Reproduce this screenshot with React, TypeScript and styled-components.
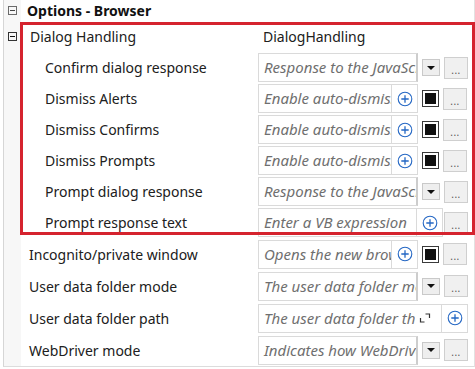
import React from 'react';
import styled, { createGlobalStyle } from 'styled-components';

const GlobalStyle = createGlobalStyle`
  html, body { margin: 0; padding: 0; background: #fff; }
  body {
    font-family: 'Noto Sans', 'Open Sans', sans-serif;
    font-size: 14px;
    color: #202020;
  }
`;

const Frame = styled.div`
  width: 472px;
  margin-left: 3px;
  box-sizing: border-box;
  border-left: 1px solid #d6d6d6;
  border-right: 1px solid #e2e2e2;
  border-bottom: 1px solid #dcdcdc;
`;

const Row = styled.div<{ $h: number }>`
  display: flex;
  align-items: center;
  height: ${({ $h }) => $h}px;
`;

const Gutter = styled.div`
  width: 17px;
  align-self: stretch;
  background: #f7f7f7;
  display: flex;
  align-items: center;
  justify-content: center;
`;

const Toggle = styled.span<{ $dark?: boolean }>`
  width: 9px;
  height: 9px;
  box-sizing: border-box;
  border: 1px solid ${({ $dark }) => ($dark ? '#333' : '#6a6a6a')};
  display: flex;
  align-items: center;
  justify-content: center;
  &::before {
    content: '';
    width: 5px;
    height: 1px;
    background: ${({ $dark }) => ($dark ? '#111' : '#444')};
  }
`;

const CategoryTitle = styled.div`
  padding-left: 6px;
  font-weight: 700;
  color: #111;
`;

const Label = styled.div<{ $indent: number }>`
  width: 237px;
  box-sizing: border-box;
  padding-left: ${({ $indent }) => $indent}px;
  white-space: nowrap;
  overflow: hidden;
`;

const Value = styled.div`
  flex: 1;
  display: flex;
  align-items: center;
`;

const PlainValue = styled.span`
  padding-left: 5px;
`;

const Field = styled.div<{ $w: number; $shade?: boolean }>`
  width: ${({ $w }) => $w}px;
  height: 29px;
  box-sizing: border-box;
  border: 1px solid #dadada;
  border-right: ${({ $shade }) => ($shade ? '2px solid #cdcdcd' : '1px solid #dadada')};
  display: flex;
  align-items: stretch;
  overflow: hidden;
`;

const Hint = styled.span`
  flex: 1;
  min-width: 0;
  overflow: hidden;
  white-space: nowrap;
  font-style: italic;
  font-size: 15px;
  color: #6f6f6f;
  padding-left: 5px;
  line-height: 27px;
`;

const PlusCell = styled.span<{ $boxed?: boolean }>`
  width: 26px;
  flex: none;
  box-sizing: border-box;
  border-left: 1px solid #dadada;
  display: flex;
  align-items: center;
  justify-content: center;
  ${({ $boxed }) =>
    $boxed &&
    `
    height: 29px;
    border: 1px solid #dadada;
    border-left: none;
  `}
`;

const ExpandSlot = styled.span`
  width: 20px;
  flex: none;
  padding-right: 6px;
  display: flex;
  align-items: center;
  justify-content: center;
`;

const DropButton = styled.span`
  margin-left: 4px;
  width: 18px;
  height: 17px;
  box-sizing: border-box;
  background: #eeeeee;
  border: 1px solid #c9c9c9;
  display: flex;
  align-items: center;
  justify-content: center;
  &::before {
    content: '';
    border-left: 4px solid transparent;
    border-right: 4px solid transparent;
    border-top: 4px solid #111;
  }
`;

const Check = styled.span`
  margin-left: 4px;
  width: 17px;
  height: 17px;
  box-sizing: border-box;
  border: 1px solid #3a3a3a;
  padding: 2px;
  background: #fff;
  &::before {
    content: '';
    display: block;
    width: 100%;
    height: 100%;
    background: #111;
  }
`;

const Ellipsis = styled.span<{ $gap: number }>`
  margin-left: ${({ $gap }) => $gap}px;
  width: 24px;
  height: 22px;
  box-sizing: border-box;
  background: #f0f0f0;
  border: 1px solid #cfcfcf;
  display: flex;
  align-items: flex-end;
  justify-content: center;
  font-size: 10px;
  line-height: 12px;
  color: #555;
  padding-bottom: 2px;
  letter-spacing: 0.5px;
`;

const Group = styled.div`
  position: relative;
  &::after {
    content: '';
    position: absolute;
    top: 1px;
    left: 16px;
    right: -1px;
    bottom: 3px;
    border: 3px solid #d5232e;
    pointer-events: none;
  }
`;

const PlusIcon = () => (
  <svg width="16" height="16" viewBox="0 0 16 16">
    <circle cx="8" cy="8" r="6.8" fill="none" stroke="#2467c4" strokeWidth="1.1" />
    <path d="M8 4.3V11.7M4.3 8H11.7" stroke="#2467c4" strokeWidth="1.3" />
  </svg>
);

const ExpandIcon = () => (
  <svg width="12" height="10" viewBox="0 0 12 10">
    <path d="M1.5 5v4h4M6.5 1h4v4" fill="none" stroke="#333" strokeWidth="1.2" />
  </svg>
);

type Kind = 'text' | 'dropdown' | 'check' | 'expr' | 'path';

interface Prop {
  label: string;
  indent: number;
  kind: Kind;
  value: string;
  toggle?: boolean;
}

const dialogRows: Prop[] = [
  { label: 'Dialog Handling', indent: 9, kind: 'text', value: 'DialogHandling', toggle: true },
  { label: 'Confirm dialog response', indent: 24, kind: 'dropdown', value: 'Response to the JavaScript confirm dialog' },
  { label: 'Dismiss Alerts', indent: 24, kind: 'check', value: 'Enable auto-dismiss of alerts' },
  { label: 'Dismiss Confirms', indent: 24, kind: 'check', value: 'Enable auto-dismiss of confirms' },
  { label: 'Dismiss Prompts', indent: 24, kind: 'check', value: 'Enable auto-dismiss of prompts' },
  { label: 'Prompt dialog response', indent: 24, kind: 'dropdown', value: 'Response to the JavaScript prompt dialog' },
  { label: 'Prompt response text', indent: 24, kind: 'expr', value: 'Enter a VB expression' },
];

const otherRows: Prop[] = [
  { label: 'Incognito/private window', indent: 8, kind: 'check', value: 'Opens the new browser in incognito mode' },
  { label: 'User data folder mode', indent: 8, kind: 'dropdown', value: 'The user data folder mode to use' },
  { label: 'User data folder path', indent: 8, kind: 'path', value: 'The user data folder that the browser uses' },
  { label: 'WebDriver mode', indent: 8, kind: 'dropdown', value: 'Indicates how WebDriver is started' },
];

const Editor: React.FC<{ p: Prop }> = ({ p }) => {
  switch (p.kind) {
    case 'text':
      return <PlainValue>{p.value}</PlainValue>;
    case 'dropdown':
      return (
        <>
          <Field $w={160} $shade><Hint>{p.value}</Hint></Field>
          <DropButton />
          <Ellipsis $gap={4}>...</Ellipsis>
        </>
      );
    case 'check':
      return (
        <>
          <Field $w={160}>
            <Hint>{p.value}</Hint>
            <PlusCell><PlusIcon /></PlusCell>
          </Field>
          <Check />
          <Ellipsis $gap={4}>...</Ellipsis>
        </>
      );
    case 'expr':
      return (
        <>
          <Field $w={185}>
            <Hint>{p.value}</Hint>
            <PlusCell><PlusIcon /></PlusCell>
          </Field>
          <Ellipsis $gap={1}>...</Ellipsis>
        </>
      );
    case 'path':
      return (
        <>
          <Field $w={184}>
            <Hint>{p.value}</Hint>
            <ExpandSlot><ExpandIcon /></ExpandSlot>
          </Field>
          <PlusCell $boxed><PlusIcon /></PlusCell>
        </>
      );
  }
};

const PropRow: React.FC<{ p: Prop; h: number }> = ({ p, h }) => (
  <Row $h={h}>
    <Gutter>{p.toggle && <Toggle $dark />}</Gutter>
    <Label $indent={p.indent}>{p.label}</Label>
    <Value><Editor p={p} /></Value>
  </Row>
);

export default function App() {
  return (
    <>
      <GlobalStyle />
      <Frame>
        <Row $h={21}>
          <Gutter><Toggle /></Gutter>
          <CategoryTitle>Options - Browser</CategoryTitle>
        </Row>
        <Group>
          {dialogRows.map(p => <PropRow key={p.label} p={p} h={31} />)}
        </Group>
        {otherRows.map(p => <PropRow key={p.label} p={p} h={32} />)}
      </Frame>
    </>
  );
}
